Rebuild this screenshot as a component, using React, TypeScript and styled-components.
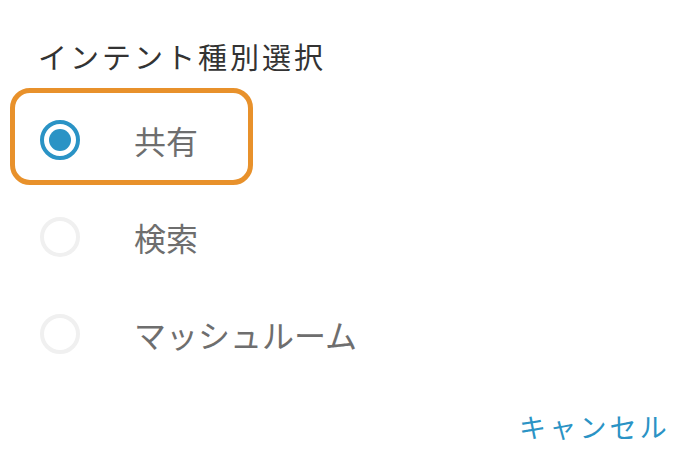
import styled, { createGlobalStyle } from "styled-components";

const OPTIONS = [
  { key: "share", label: "共有" },
  { key: "search", label: "検索" },
  { key: "mushroom", label: "マッシュルーム" },
];

const GlobalStyle = createGlobalStyle`
  html, body {
    margin: 0;
    padding: 0;
    background: #fff;
  }
  body {
    font-family: "Noto Sans CJK JP", "Noto Sans", sans-serif;
  }
`;

const Dialog = styled.div`
  width: 678px;
  height: 459px;
  box-sizing: border-box;
  padding: 36px 8px 0 10px;
  display: flex;
  flex-direction: column;
`;

const Title = styled.h1`
  margin: 0 0 12px 28px;
  font-size: 29px;
  font-weight: 400;
  line-height: 40px;
  letter-spacing: 3px;
  color: #333;
`;

const List = styled.div`
  display: flex;
  flex-direction: column;
  align-items: flex-start;
`;

const Row = styled.label<{ focused: boolean }>`
  display: flex;
  align-items: center;
  gap: 54px;
  height: 97px;
  box-sizing: border-box;
  padding: 6px 50px 0 25px;
  border: 5px solid ${(p) => (p.focused ? "#e8912b" : "transparent")};
  border-radius: 20px;
  cursor: pointer;
`;

const Radio = styled.span<{ checked: boolean }>`
  width: 40px;
  height: 40px;
  box-sizing: border-box;
  border-radius: 50%;
  border: 4px solid ${(p) => (p.checked ? "#2a93c5" : "#f0f0f0")};
  display: flex;
  align-items: center;
  justify-content: center;
  flex-shrink: 0;

  &::after {
    content: "";
    display: ${(p) => (p.checked ? "block" : "none")};
    width: 22px;
    height: 22px;
    border-radius: 50%;
    background: #2a93c5;
  }
`;

const Label = styled.span`
  font-size: 32px;
  line-height: 40px;
  color: #6e6e6e;
`;

const Actions = styled.div`
  display: flex;
  justify-content: flex-end;
  margin-top: 30px;
`;

const TextButton = styled.button`
  border: 0;
  background: none;
  padding: 0;
  font-family: inherit;
  font-size: 27px;
  line-height: 36px;
  letter-spacing: 3.2px;
  color: #2a93c5;
  cursor: pointer;
`;

const App = () => {
  const selected = "share";

  return (
    <>
      <GlobalStyle />
      <Dialog>
        <Title>インテント種別選択</Title>
        <List>
          {OPTIONS.map((opt) => (
            <Row key={opt.key} focused={opt.key === selected}>
              <Radio checked={opt.key === selected} />
              <Label>{opt.label}</Label>
            </Row>
          ))}
        </List>
        <Actions>
          <TextButton type="button">キャンセル</TextButton>
        </Actions>
      </Dialog>
    </>
  );
};

export default App;
